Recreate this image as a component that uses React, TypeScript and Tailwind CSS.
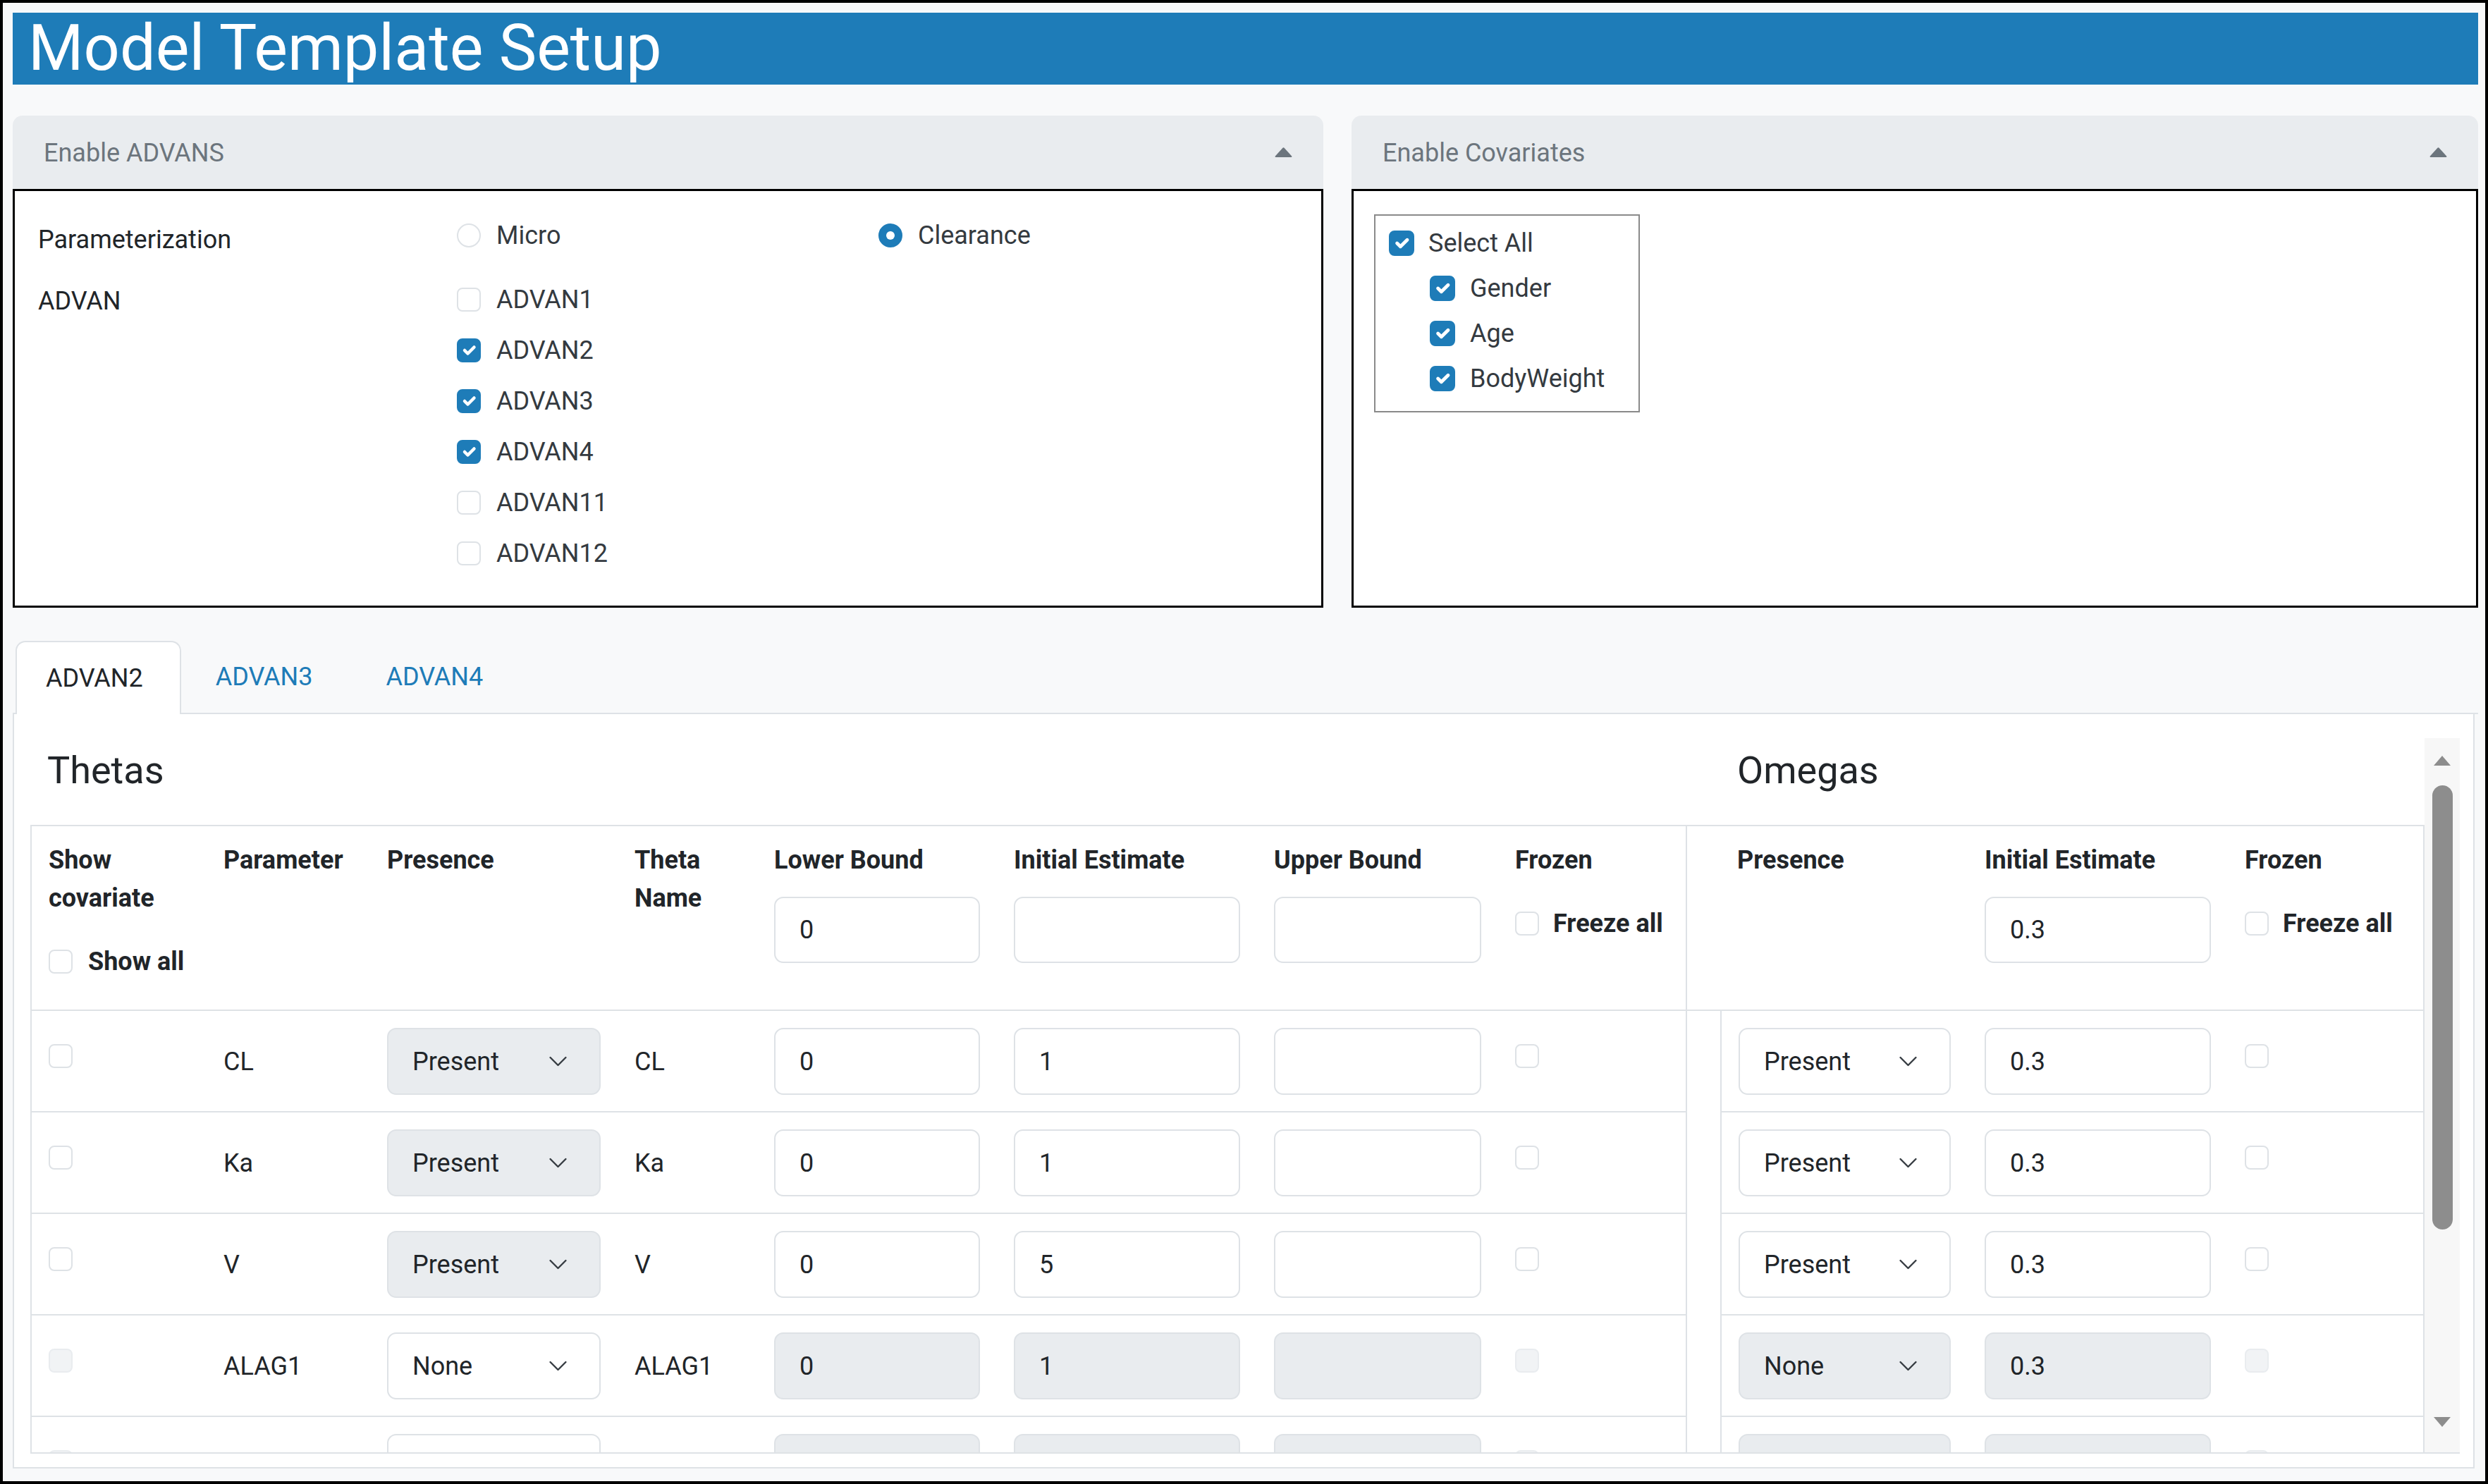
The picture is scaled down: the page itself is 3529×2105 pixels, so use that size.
import type { ReactNode } from 'react'

const COLS = [
  'w-[248px]',
  'w-[232px]',
  'w-[351px]',
  'w-[198px]',
  'w-[340px]',
  'w-[369px]',
  'w-[342px]',
  'w-[268px]',
  'w-[47px]',
  'w-[351px]',
  'w-[369px]',
  'w-[279px]',
]

const advans = [
  { name: 'ADVAN1', on: false },
  { name: 'ADVAN2', on: true },
  { name: 'ADVAN3', on: true },
  { name: 'ADVAN4', on: true },
  { name: 'ADVAN11', on: false },
  { name: 'ADVAN12', on: false },
]

// last row is scrolled past the bottom edge, only its top shows
const rows = [
  { name: 'CL', presence: 'Present', lower: '0', init: '1', omega: 'Present', omegaInit: '0.3', on: true },
  { name: 'Ka', presence: 'Present', lower: '0', init: '1', omega: 'Present', omegaInit: '0.3', on: true },
  { name: 'V', presence: 'Present', lower: '0', init: '5', omega: 'Present', omegaInit: '0.3', on: true },
  { name: 'ALAG1', presence: 'None', lower: '0', init: '1', omega: 'None', omegaInit: '0.3', on: false },
  { name: '', presence: '', lower: '', init: '', omega: '', omegaInit: '', on: false },
]

export default function App() {
  return (
    <div className="h-[2105px] w-[3529px] overflow-hidden border-4 border-black bg-[#f8f9fa] pt-[14px] pr-[10px] pl-[14px] font-['Roboto','Noto_Sans',sans-serif] text-[36px] leading-[54px] text-[#212529]">
      <h1 className="flex h-[102px] items-center bg-[#1e7cb8] pl-[22px] text-[90px] leading-none font-normal text-white">
        Model Template Setup
      </h1>

      {/* top cards */}
      <div className="mt-[44px] grid grid-cols-[1859px_1598px] gap-x-[40px]">
        <Card title="Enable ADVANS">
          <div className="grid grid-cols-[594px_598px_1fr] pt-[36px] pl-[33px]">
            <div className="mt-[6px]">Parameterization</div>
            <label className="-mt-[6px] flex items-center gap-[22px] text-[#343a40]">
              <Radio /> Micro
            </label>
            <label className="-mt-[6px] flex items-center gap-[22px] text-[#343a40]">
              <Radio checked /> Clearance
            </label>
            <div className="mt-[33px]">ADVAN</div>
            <div className="col-span-2 mt-[31px] flex flex-col gap-[18px]">
              {advans.map((a) => (
                <label key={a.name} className="flex items-center gap-[22px] text-[#343a40]">
                  <Check checked={a.on} />
                  {a.name}
                </label>
              ))}
            </div>
          </div>
        </Card>
        <Card title="Enable Covariates">
          <div className="pt-[33px] pl-[29px]">
            <div className="inline-flex flex-col gap-[10px] border-2 border-[#8a8a8a] pt-[12px] pr-[48px] pb-[19px] pl-[19px] text-[#343a40]">
              <label className="flex items-center gap-[20px]">
                <Check checked big /> Select All
              </label>
              {['Gender', 'Age', 'BodyWeight'].map((c) => (
                <label key={c} className="ml-[58px] flex items-center gap-[21px]">
                  <Check checked big /> {c}
                </label>
              ))}
            </div>
          </div>
        </Card>
      </div>

      {/* tabs */}
      <div className="mt-[47px] flex h-[104px] items-end border-b-2 border-[#dee2e6]">
        <div className="-mb-[2px] ml-[4px] flex h-[104px] items-center rounded-t-[14px] border-2 border-b-0 border-[#dee2e6] bg-white pr-[52px] pl-[41px]">
          ADVAN2
        </div>
        <div className="flex h-full items-center pr-[55px] pl-[49px] text-[#1e7cb8]">ADVAN3</div>
        <div className="flex h-full items-center pl-[49px] text-[#1e7cb8]">ADVAN4</div>
      </div>

      <div className="h-[1070px] w-[3492px] border-2 border-t-0 border-[#dee2e6] bg-white pt-[34px] pr-[19px] pl-[23px]">
        <div className="flex h-[1015px] border-b-2 border-[#dee2e6]">
          <div className="w-[3396px] overflow-hidden">
            <div className="flex pt-[13px] text-[54px] leading-[65px]">
              <div className="w-[2397px] pl-[24px]">Thetas</div>
              <div className="pl-[24px]">Omegas</div>
            </div>

            <div className="mt-[45px] border-t-2 border-l-2 border-[#dee2e6]">
              {/* header row */}
              <div className="flex h-[262px] font-bold">
                <HeadCell i={0}>
                  <div>
                    Show
                    <br />
                    covariate
                  </div>
                  <label className="mt-[36px] flex items-center gap-[22px]">
                    <Check /> Show all
                  </label>
                </HeadCell>
                <HeadCell i={1}>Parameter</HeadCell>
                <HeadCell i={2}>Presence</HeadCell>
                <HeadCell i={3}>
                  Theta
                  <br />
                  Name
                </HeadCell>
                <HeadCell i={4}>
                  Lower Bound
                  <Field value="0" className="mt-[25px] h-[94px]" />
                </HeadCell>
                <HeadCell i={5}>
                  Initial Estimate
                  <Field value="" className="mt-[25px] h-[94px]" />
                </HeadCell>
                <HeadCell i={6}>
                  Upper Bound
                  <Field value="" className="mt-[25px] h-[94px]" />
                </HeadCell>
                <HeadCell i={7} right>
                  Frozen
                  <label className="mt-[36px] flex items-center gap-[20px]">
                    <Check /> Freeze all
                  </label>
                </HeadCell>
                <div className={`${COLS[8]} shrink-0 border-b-2 border-[#dee2e6]`} />
                <HeadCell i={9}>Presence</HeadCell>
                <HeadCell i={10}>
                  Initial Estimate
                  <Field value="0.3" className="mt-[25px] h-[94px]" />
                </HeadCell>
                <HeadCell i={11} right>
                  Frozen
                  <label className="mt-[36px] flex items-center gap-[20px]">
                    <Check /> Freeze all
                  </label>
                </HeadCell>
              </div>

              {/* body rows */}
              {rows.map((r, idx) => (
                <div key={idx} className="flex h-[144px]">
                  <BodyCell i={0}>
                    <Check disabled={!r.on} className="mt-[23px] self-start" />
                  </BodyCell>
                  <BodyCell i={1}>{r.name}</BodyCell>
                  <BodyCell i={2}>
                    <Select value={r.presence} gray={r.on} />
                  </BodyCell>
                  <BodyCell i={3}>{r.name}</BodyCell>
                  <BodyCell i={4}>
                    <Field value={r.lower} gray={!r.on} className="h-[95px]" />
                  </BodyCell>
                  <BodyCell i={5}>
                    <Field value={r.init} gray={!r.on} className="h-[95px]" />
                  </BodyCell>
                  <BodyCell i={6}>
                    <Field value="" gray={!r.on} className="h-[95px]" />
                  </BodyCell>
                  <BodyCell i={7} right>
                    <Check disabled={!r.on} className="mt-[23px] self-start" />
                  </BodyCell>
                  <div className={`${COLS[8]} shrink-0`} />
                  <BodyCell i={9} left>
                    <Select value={r.omega} gray={!r.on} />
                  </BodyCell>
                  <BodyCell i={10}>
                    <Field value={r.omegaInit} gray={!r.on} className="h-[95px]" />
                  </BodyCell>
                  <BodyCell i={11} right>
                    <Check disabled={!r.on} className="mt-[23px] self-start" />
                  </BodyCell>
                </div>
              ))}
            </div>
          </div>

          {/* scrollbar */}
          <div className="flex w-[50px] flex-col items-center bg-[#f7f7f7]">
            <div className="flex h-[64px] items-center">
              <svg width="24" height="14" viewBox="0 0 24 14">
                <polygon points="12,0 24,14 0,14" fill="#8d8d8d" />
              </svg>
            </div>
            <div className="mt-[3px] h-[630px] w-[29px] rounded-full bg-[#8d8d8d]" />
            <div className="flex-1" />
            <div className="mb-[11px] flex h-[64px] items-center">
              <svg width="24" height="14" viewBox="0 0 24 14">
                <polygon points="0,0 24,0 12,14" fill="#8d8d8d" />
              </svg>
            </div>
          </div>
        </div>
      </div>
    </div>
  )
}

function Card({ title, children }: { title: string; children: ReactNode }) {
  return (
    <section>
      <div className="flex h-[104px] items-center justify-between rounded-t-[14px] bg-[#e9ecef] pr-[44px] pl-[44px] text-[#6c757d]">
        <span className="mt-[2px]">{title}</span>
        <svg width="25" height="14" viewBox="0 0 25 14">
          <path d="M11 1.2a2 2 0 0 1 3 0l10 11A1 1 0 0 1 23.3 14H1.7A1 1 0 0 1 1 12.2Z" fill="#6c757d" />
        </svg>
      </div>
      <div className="h-[594px] border-[3px] border-black bg-white">{children}</div>
    </section>
  )
}

function HeadCell({ i, right, children }: { i: number; right?: boolean; children: ReactNode }) {
  return (
    <div
      className={`${COLS[i]} shrink-0 border-b-2 border-[#dee2e6] px-[24px] pt-[21px] whitespace-nowrap ${
        right ? 'border-r-2' : ''
      }`}
    >
      {children}
    </div>
  )
}

function BodyCell({
  i,
  right,
  left,
  children,
}: {
  i: number
  right?: boolean
  left?: boolean
  children: ReactNode
}) {
  return (
    <div
      className={`${COLS[i]} flex h-[144px] shrink-0 items-start border-b-2 border-[#dee2e6] px-[24px] pt-[24px] ${
        right ? 'border-r-2' : ''
      } ${left ? 'border-l-2' : ''}`}
    >
      <div className="flex h-[95px] w-full items-center">{children}</div>
    </div>
  )
}

function Check({
  checked = false,
  disabled = false,
  big = false,
  className = '',
}: {
  checked?: boolean
  disabled?: boolean
  big?: boolean
  className?: string
}) {
  const tone = checked
    ? 'border-[#1e7cb8] bg-[#1e7cb8]'
    : disabled
      ? 'border-[#e9ecef] bg-[#f1f3f5]'
      : 'border-[#dee2e6] bg-white'
  return (
    <span
      className={`flex shrink-0 items-center justify-center rounded-[8px] border-2 ${
        big ? 'h-[36px] w-[36px]' : 'h-[34px] w-[34px]'
      } ${tone} ${className}`}
    >
      {checked && (
        <svg viewBox="0 0 20 20" className="h-full w-full">
          <path
            d="m6 10 3 3 6-6"
            fill="none"
            stroke="#fff"
            strokeWidth="3"
            strokeLinecap="round"
            strokeLinejoin="round"
          />
        </svg>
      )}
    </span>
  )
}

function Radio({ checked = false }: { checked?: boolean }) {
  return (
    <span
      className={`flex h-[34px] w-[34px] shrink-0 items-center justify-center rounded-full border-2 ${
        checked ? 'border-[#1e7cb8] bg-[#1e7cb8]' : 'border-[#dee2e6] bg-white'
      }`}
    >
      {checked && <span className="h-[12px] w-[12px] rounded-full bg-white" />}
    </span>
  )
}

function Field({ value, gray = false, className = '' }: { value: string; gray?: boolean; className?: string }) {
  return (
    <div
      className={`flex w-full items-center rounded-[13px] border-2 border-[#dee2e6] pl-[34px] font-normal ${
        gray ? 'bg-[#e9ecef]' : 'bg-white'
      } ${className}`}
    >
      {value}
    </div>
  )
}

function Select({ value, gray }: { value: string; gray: boolean }) {
  return (
    <div
      className={`flex h-[95px] w-full items-center justify-between rounded-[13px] border-2 border-[#dee2e6] pr-[46px] pl-[34px] ${
        gray ? 'bg-[#e9ecef]' : 'bg-white'
      }`}
    >
      <span>{value}</span>
      <svg width="25" height="15" viewBox="0 0 16 9">
        <path d="M1 1l7 7 7-7" fill="none" stroke="#343a40" strokeWidth="1.5" strokeLinecap="round" strokeLinejoin="round" />
      </svg>
    </div>
  )
}
